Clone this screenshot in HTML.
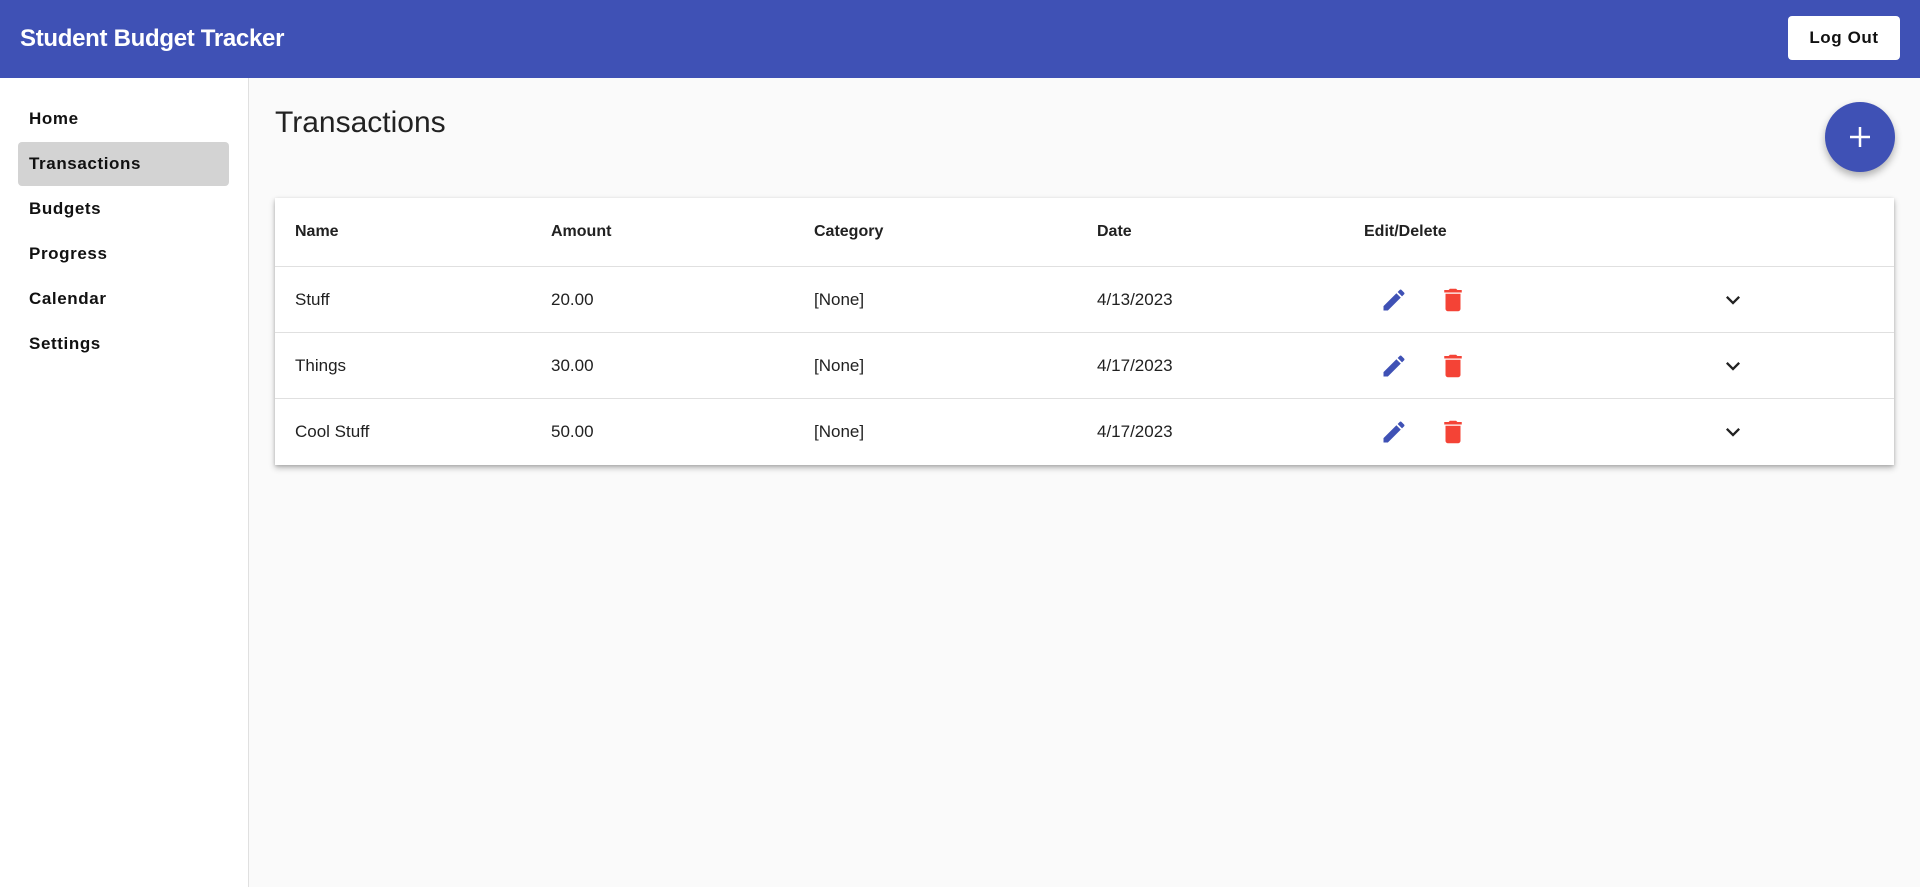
<!DOCTYPE html>
<html><head><meta charset="utf-8"><style>
*{margin:0;padding:0;box-sizing:border-box}
body{width:1920px;height:887px;overflow:hidden;font-family:"Liberation Sans",sans-serif;background:#fafafa;color:#212121;position:relative}
.hdr{position:absolute;left:0;top:0;width:1920px;height:78px;background:#3f51b5}
.hdr h1{position:absolute;left:20px;top:25px;font-size:24px;font-weight:bold;color:#fff;letter-spacing:-0.3px}
.lo{position:absolute;left:1788px;top:16px;width:112px;height:44px;background:#fff;border-radius:4px;font-size:17px;font-weight:bold;text-align:center;line-height:44px;letter-spacing:0.6px;color:#111}
.side{position:absolute;left:0;top:78px;width:249px;height:809px;background:#fff;border-right:1px solid #e0e0e0}
.nav{position:absolute;left:18px;width:211px;height:44px;line-height:44px;padding-left:11px;font-size:17px;font-weight:bold;letter-spacing:0.6px;color:#111;border-radius:4px}
.nav.act{background:#d3d3d3}
.title{position:absolute;left:275px;top:106px;font-size:30px;color:#222}
.fab{position:absolute;left:1825px;top:102px;width:70px;height:70px;border-radius:50%;background:#3f51b5;box-shadow:0 4px 8px rgba(0,0,0,.3);color:#fff;text-align:center}
.card{position:absolute;left:275px;top:198px;width:1619px;height:267px;background:#fff;box-shadow:0 3px 6px rgba(0,0,0,.25),0 1px 3px rgba(0,0,0,.15)}
.row{position:absolute;left:0;width:1619px;border-bottom:1px solid #e0e0e0}
.c{position:absolute;font-size:17px;top:50%;transform:translateY(-50%)}
.h .c{font-weight:bold;font-size:16px}
svg.i{position:absolute;top:50%;transform:translateY(-50%)}
</style></head><body>
<div class="hdr"><h1>Student Budget Tracker</h1><div class="lo">Log Out</div></div>
<div class="side">
<div class="nav" style="top:19px">Home</div>
<div class="nav act" style="top:64px">Transactions</div>
<div class="nav" style="top:109px">Budgets</div>
<div class="nav" style="top:154px">Progress</div>
<div class="nav" style="top:199px">Calendar</div>
<div class="nav" style="top:244px">Settings</div>
</div>
<div class="title">Transactions</div>
<div class="fab"><svg width="70" height="70" viewBox="0 0 70 70"><path d="M35 25v20M25 35h20" stroke="#fff" stroke-width="2.5"/></svg></div>
<div class="card">
<div class="row h" style="top:0;height:69px"><span class="c" style="left:20px">Name</span><span class="c" style="left:276px">Amount</span><span class="c" style="left:539px">Category</span><span class="c" style="left:822px">Date</span><span class="c" style="left:1089px">Edit/Delete</span></div>
<div class="row" style="top:69px;height:66px"><span class="c" style="left:20px">Stuff</span><span class="c" style="left:276px">20.00</span><span class="c" style="left:539px">[None]</span><span class="c" style="left:822px">4/13/2023</span>
<svg class="i" style="left:1105px" width="28" height="28" viewBox="0 0 24 24"><path fill="#3f51b5" d="M3 17.25V21h3.75L17.81 9.94l-3.75-3.75L3 17.25zM20.71 7.04c.39-.39.39-1.02 0-1.41l-2.34-2.34c-.39-.39-1.02-.39-1.41 0l-1.83 1.83 3.75 3.75 1.83-1.83z"/></svg>
<svg class="i" style="left:1163px" width="30" height="30" viewBox="0 0 24 24"><path fill="#f44336" d="M6 19c0 1.1.9 2 2 2h8c1.1 0 2-.9 2-2V7H6v12zM19 4h-3.5l-1-1h-5l-1 1H5v2h14V4z"/></svg>
<svg class="i" style="left:1444px" width="28" height="28" viewBox="0 0 24 24"><path fill="#222" d="M16.59 8.59L12 13.17 7.41 8.59 6 10l6 6 6-6z"/></svg></div>
<div class="row" style="top:135px;height:66px"><span class="c" style="left:20px">Things</span><span class="c" style="left:276px">30.00</span><span class="c" style="left:539px">[None]</span><span class="c" style="left:822px">4/17/2023</span>
<svg class="i" style="left:1105px" width="28" height="28" viewBox="0 0 24 24"><path fill="#3f51b5" d="M3 17.25V21h3.75L17.81 9.94l-3.75-3.75L3 17.25zM20.71 7.04c.39-.39.39-1.02 0-1.41l-2.34-2.34c-.39-.39-1.02-.39-1.41 0l-1.83 1.83 3.75 3.75 1.83-1.83z"/></svg>
<svg class="i" style="left:1163px" width="30" height="30" viewBox="0 0 24 24"><path fill="#f44336" d="M6 19c0 1.1.9 2 2 2h8c1.1 0 2-.9 2-2V7H6v12zM19 4h-3.5l-1-1h-5l-1 1H5v2h14V4z"/></svg>
<svg class="i" style="left:1444px" width="28" height="28" viewBox="0 0 24 24"><path fill="#222" d="M16.59 8.59L12 13.17 7.41 8.59 6 10l6 6 6-6z"/></svg></div>
<div class="row" style="top:201px;height:66px;border-bottom:none"><span class="c" style="left:20px">Cool Stuff</span><span class="c" style="left:276px">50.00</span><span class="c" style="left:539px">[None]</span><span class="c" style="left:822px">4/17/2023</span>
<svg class="i" style="left:1105px" width="28" height="28" viewBox="0 0 24 24"><path fill="#3f51b5" d="M3 17.25V21h3.75L17.81 9.94l-3.75-3.75L3 17.25zM20.71 7.04c.39-.39.39-1.02 0-1.41l-2.34-2.34c-.39-.39-1.02-.39-1.41 0l-1.83 1.83 3.75 3.75 1.83-1.83z"/></svg>
<svg class="i" style="left:1163px" width="30" height="30" viewBox="0 0 24 24"><path fill="#f44336" d="M6 19c0 1.1.9 2 2 2h8c1.1 0 2-.9 2-2V7H6v12zM19 4h-3.5l-1-1h-5l-1 1H5v2h14V4z"/></svg>
<svg class="i" style="left:1444px" width="28" height="28" viewBox="0 0 24 24"><path fill="#222" d="M16.59 8.59L12 13.17 7.41 8.59 6 10l6 6 6-6z"/></svg></div>
</div>
</body></html>
